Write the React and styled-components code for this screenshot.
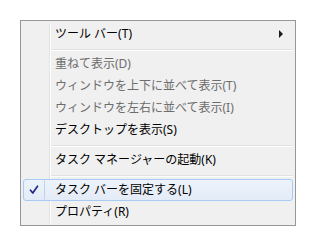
import React from "react";
import styled, { createGlobalStyle } from "styled-components";

const GlobalStyle = createGlobalStyle`
  html, body {
    margin: 0;
    padding: 0;
    background: #ffffff;
  }
  body {
    font-family: "Noto Sans", "Noto Sans CJK JP", sans-serif;
  }
`;

const Menu = styled.div`
  position: relative;
  box-sizing: border-box;
  width: 276px;
  margin: 20px 0 0 20px;
  padding: 2px;
  background: #f0f0f0;
  border: 1px solid #979797;

  &::before {
    content: "";
    position: absolute;
    left: 28px;
    top: 2px;
    bottom: 2px;
    width: 1px;
    background: #e2e3e3;
    border-right: 1px solid #ffffff;
  }
`;

const Row = styled.div`
  position: relative;
  display: flex;
  align-items: center;
  box-sizing: border-box;
  height: 22px;
  font-size: 12px;
  line-height: 22px;
  color: ${(props) => (props.disabled ? "#6d6d6d" : "#000000")};
  border: 1px solid ${(props) => (props.active ? "#a8cbf5" : "transparent")};
  border-radius: 3px;
  background: ${(props) =>
    props.active ? "linear-gradient(#eef3fa, #e3ebf7)" : "transparent"};
  z-index: 1;
`;

const IconBox = styled.div`
  display: flex;
  align-items: center;
  justify-content: center;
  box-sizing: border-box;
  width: 21px;
  height: 20px;
  border-right: 1px solid ${(props) => (props.active ? "#b9d3f3" : "transparent")};
  border-radius: 2px;
`;

const Label = styled.span`
  flex: 1;
  padding-left: 10px;
  white-space: nowrap;
`;

const Arrow = styled.span`
  width: 0;
  height: 0;
  margin-right: 9px;
  border-top: 4px solid transparent;
  border-bottom: 4px solid transparent;
  border-left: 4px solid #1a1a1a;
`;

const Separator = styled.div`
  height: 8px;
  margin-left: 28px;
  display: flex;
  flex-direction: column;
  justify-content: center;

  &::before {
    content: "";
    display: block;
    height: 1px;
    margin-top: 2px;
    background: #e2e3e3;
    border-bottom: 1px solid #ffffff;
  }
`;

const Check = () => (
  <svg width="10" height="10" viewBox="0 0 10 10">
    <path
      d="M1.5 5.2 L3.8 8 L8.5 1.2"
      fill="none"
      stroke="#1f2a86"
      strokeWidth="1.7"
      strokeLinecap="round"
      strokeLinejoin="round"
    />
  </svg>
);

function Item({ label, disabled, active, checked, submenu }) {
  return (
    <Row disabled={disabled} active={active}>
      <IconBox active={active}>{checked && <Check />}</IconBox>
      <Label>{label}</Label>
      {submenu && <Arrow />}
    </Row>
  );
}

export default function App() {
  return (
    <>
      <GlobalStyle />
      <Menu>
        <Item label="ツール バー(T)" submenu />
        <Separator />
        <Item label="重ねて表示(D)" disabled />
        <Item label="ウィンドウを上下に並べて表示(T)" disabled />
        <Item label="ウィンドウを左右に並べて表示(I)" disabled />
        <Item label="デスクトップを表示(S)" />
        <Separator />
        <Item label="タスク マネージャーの起動(K)" />
        <Separator />
        <Item label="タスク バーを固定する(L)" active checked />
        <Item label="プロパティ(R)" />
      </Menu>
    </>
  );
}
